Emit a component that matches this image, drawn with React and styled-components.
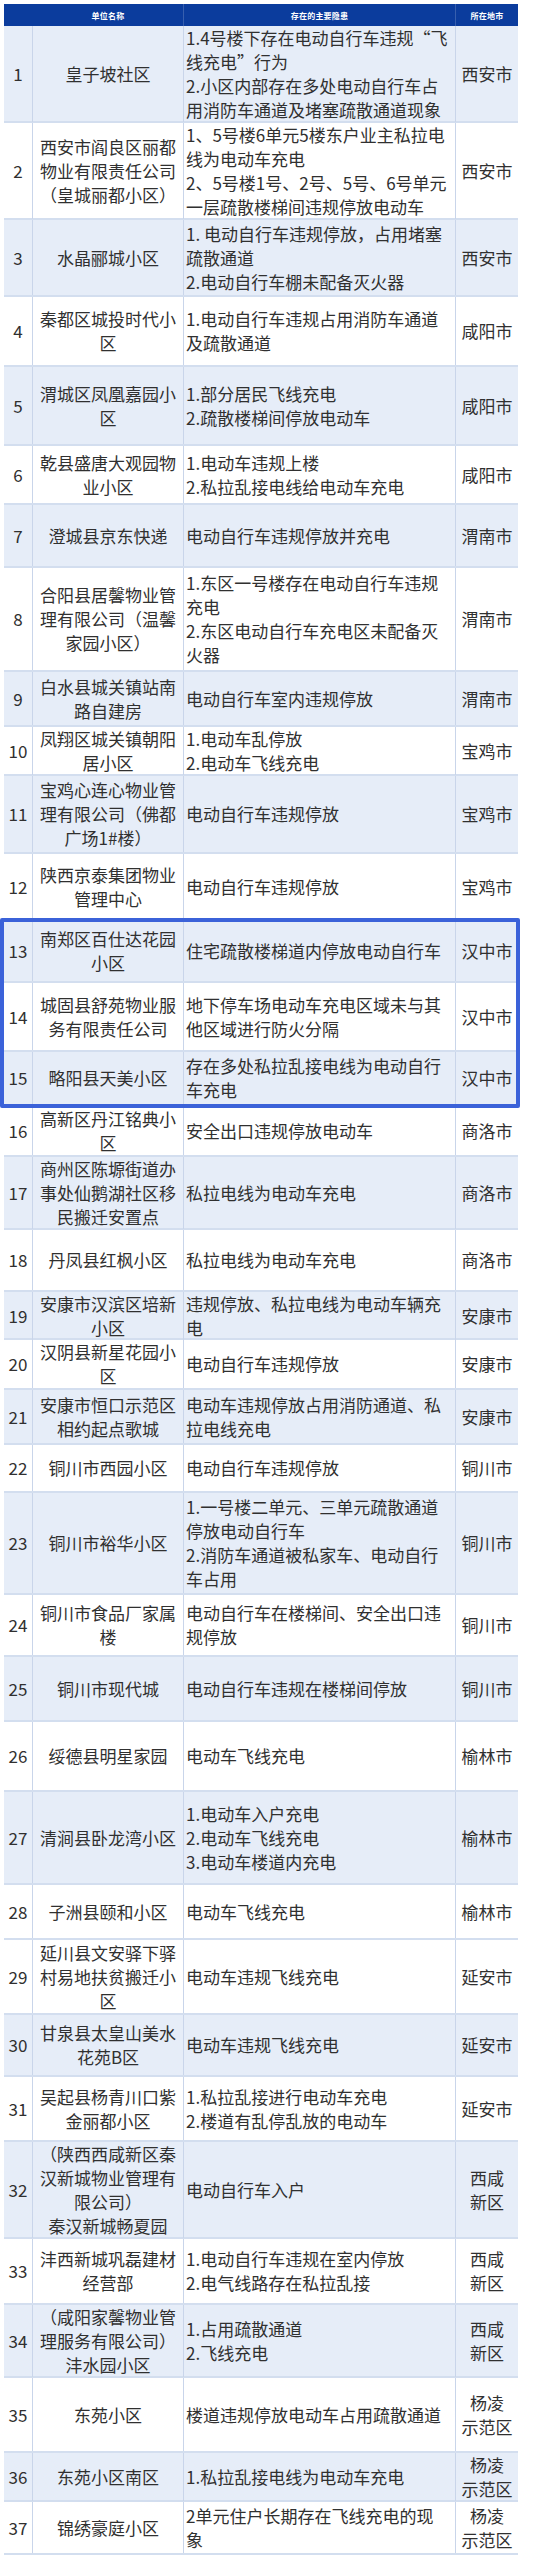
import React from 'react'
import styled, { createGlobalStyle } from 'styled-components'

const Global = createGlobalStyle`
  html, body {
    margin: 0;
    padding: 0;
    background: #ffffff;
  }
  body {
    font-family: "Noto Sans CJK SC", "Noto Sans", sans-serif;
    color: #303030;
  }
`

const COLS = '28px 151px 272px 63px'

const Page = styled.div`
  padding: 4px 21px 5px 4px;
`

const Table = styled.div`
  width: 514px;
  display: flex;
  flex-direction: column;
`

const HeadRow = styled.div`
  display: grid;
  grid-template-columns: ${COLS};
  height: 22px;
  background: #0b3c9d;
  color: #ffffff;
  font-size: 8px;
  font-weight: 700;
`

const HeadCell = styled.div`
  display: flex;
  align-items: center;
  justify-content: center;
  border-left: 1px solid ${p => (p.$first ? 'transparent' : 'rgba(255,255,255,0.18)')};
  letter-spacing: 0.2px;
`

const Row = styled.div`
  box-sizing: border-box;
  display: grid;
  grid-template-columns: ${COLS};
  height: ${p => p.$h}px;
  background: ${p => (p.$stripe ? '#e6edf8' : '#ffffff')};
  border-bottom: 2px solid #d3deef;
  font-size: 17px;
  line-height: 24px;
`

const Cell = styled.div`
  display: flex;
  flex-direction: column;
  justify-content: center;
  border-left: 1px solid #c9d5ea;
  overflow: visible;
  white-space: nowrap;
`

const NumCell = styled(Cell)`
  align-items: center;
  border-left: none;
`

const NameCell = styled(Cell)`
  align-items: center;
  text-align: center;
`

const IssueCell = styled(Cell)`
  align-items: flex-start;
  padding-left: 2px;
`

const CityCell = styled(Cell)`
  align-items: center;
  text-align: center;
`

const Line = styled.span`
  display: block;
`

const Highlight = styled.div`
  position: relative;
  &::after {
    content: '';
    position: absolute;
    top: -3px;
    bottom: -2px;
    left: -4px;
    right: -2px;
    border: 4px solid #3b62d9;
    border-radius: 2px;
    pointer-events: none;
  }
`

const rows = [
  [97, true, ['皇子坡社区'], ['1.4号楼下存在电动自行车违规“飞', '线充电”行为', '2.小区内部存在多处电动自行车占', '用消防车通道及堵塞疏散通道现象'], ['西安市']],
  [97, false, ['西安市阎良区丽都', '物业有限责任公司', '（皇城丽都小区）'], ['1、5号楼6单元5楼东户业主私拉电', '线为电动车充电', '2、5号楼1号、2号、5号、6号单元', '一层疏散楼梯间违规停放电动车'], ['西安市']],
  [77, true, ['水晶郦城小区'], ['1. 电动自行车违规停放，占用堵塞', '疏散通道', '2.电动自行车棚未配备灭火器'], ['西安市']],
  [70, false, ['秦都区城投时代小', '区'], ['1.电动自行车违规占用消防车通道', '及疏散通道'], ['咸阳市']],
  [79, true, ['渭城区凤凰嘉园小', '区'], ['1.部分居民飞线充电', '2.疏散楼梯间停放电动车'], ['咸阳市']],
  [59, false, ['乾县盛唐大观园物', '业小区'], ['1.电动车违规上楼', '2.私拉乱接电线给电动车充电'], ['咸阳市']],
  [63, true, ['澄城县京东快递'], ['电动自行车违规停放并充电'], ['渭南市']],
  [104, false, ['合阳县居馨物业管', '理有限公司（温馨', '家园小区）'], ['1.东区一号楼存在电动自行车违规', '充电', '2.东区电动自行车充电区未配备灭', '火器'], ['渭南市']],
  [55, true, ['白水县城关镇站南', '路自建房'], ['电动自行车室内违规停放'], ['渭南市']],
  [49, false, ['凤翔区城关镇朝阳', '居小区'], ['1.电动车乱停放', '2.电动车飞线充电'], ['宝鸡市']],
  [78, true, ['宝鸡心连心物业管', '理有限公司（佛都', '广场1#楼）'], ['电动自行车违规停放'], ['宝鸡市']],
  [67, false, ['陕西京泰集团物业', '管理中心'], ['电动自行车违规停放'], ['宝鸡市']],
  [62, true, ['南郑区百仕达花园', '小区'], ['住宅疏散楼梯道内停放电动自行车'], ['汉中市']],
  [69, false, ['城固县舒苑物业服', '务有限责任公司'], ['地下停车场电动车充电区域未与其', '他区域进行防火分隔'], ['汉中市']],
  [54, true, ['略阳县天美小区'], ['存在多处私拉乱接电线为电动自行', '车充电'], ['汉中市']],
  [51, false, ['高新区丹江铭典小', '区'], ['安全出口违规停放电动车'], ['商洛市']],
  [73, true, ['商州区陈塬街道办', '事处仙鹅湖社区移', '民搬迁安置点'], ['私拉电线为电动车充电'], ['商洛市']],
  [62, false, ['丹凤县红枫小区'], ['私拉电线为电动车充电'], ['商洛市']],
  [48, true, ['安康市汉滨区培新', '小区'], ['违规停放、私拉电线为电动车辆充', '电'], ['安康市']],
  [50, false, ['汉阴县新星花园小', '区'], ['电动自行车违规停放'], ['安康市']],
  [55, true, ['安康市恒口示范区', '相约起点歌城'], ['电动车违规停放占用消防通道、私', '拉电线充电'], ['安康市']],
  [48, false, ['铜川市西园小区'], ['电动自行车违规停放'], ['铜川市']],
  [102, true, ['铜川市裕华小区'], ['1.一号楼二单元、三单元疏散通道', '停放电动自行车', '2.消防车通道被私家车、电动自行', '车占用'], ['铜川市']],
  [62, false, ['铜川市食品厂家属', '楼'], ['电动自行车在楼梯间、安全出口违', '规停放'], ['铜川市']],
  [65, true, ['铜川市现代城'], ['电动自行车违规在楼梯间停放'], ['铜川市']],
  [70, false, ['绥德县明星家园'], ['电动车飞线充电'], ['榆林市']],
  [93, true, ['清涧县卧龙湾小区'], ['1.电动车入户充电', '2.电动车飞线充电', '3.电动车楼道内充电'], ['榆林市']],
  [55, false, ['子洲县颐和小区'], ['电动车飞线充电'], ['榆林市']],
  [75, false, ['延川县文安驿下驿', '村易地扶贫搬迁小', '区'], ['电动车违规飞线充电'], ['延安市']],
  [62, true, ['甘泉县太皇山美水', '花苑B区'], ['电动车违规飞线充电'], ['延安市']],
  [65, false, ['吴起县杨青川口紫', '金丽都小区'], ['1.私拉乱接进行电动车充电', '2.楼道有乱停乱放的电动车'], ['延安市']],
  [97, true, ['（陕西西咸新区秦', '汉新城物业管理有', '限公司）', '秦汉新城畅夏园'], ['电动自行车入户'], ['西咸', '新区']],
  [66, false, ['沣西新城巩磊建材', '经营部'], ['1.电动自行车违规在室内停放', '2.电气线路存在私拉乱接'], ['西咸', '新区']],
  [73, true, ['（咸阳家馨物业管', '理服务有限公司）', '沣水园小区'], ['1.占用疏散通道', '2.飞线充电'], ['西咸', '新区']],
  [75, false, ['东苑小区'], ['楼道违规停放电动车占用疏散通道'], ['杨凌', '示范区']],
  [49, true, ['东苑小区南区'], ['1.私拉乱接电线为电动车充电'], ['杨凌', '示范区']],
  [53, false, ['锦绣豪庭小区'], ['2单元住户长期存在飞线充电的现', '象'], ['杨凌', '示范区']],
]

const Lines = ({ items }) => items.map((t, i) => <Line key={i}>{t}</Line>)

const TableRow = ({ n, data }) => {
  const [h, stripe, name, issue, city] = data
  return (
    <Row $h={h} $stripe={stripe}>
      <NumCell>{n}</NumCell>
      <NameCell><Lines items={name} /></NameCell>
      <IssueCell><Lines items={issue} /></IssueCell>
      <CityCell><Lines items={city} /></CityCell>
    </Row>
  )
}

const App = () => {
  const before = rows.slice(0, 12)
  const marked = rows.slice(12, 15)
  const after = rows.slice(15)
  return (
    <Page>
      <Global />
      <Table>
        <HeadRow>
          <HeadCell $first />
          <HeadCell $first>单位名称</HeadCell>
          <HeadCell>存在的主要隐患</HeadCell>
          <HeadCell>所在地市</HeadCell>
        </HeadRow>
        {before.map((r, i) => <TableRow key={i} n={i + 1} data={r} />)}
        <Highlight>
          {marked.map((r, i) => <TableRow key={i} n={i + 13} data={r} />)}
        </Highlight>
        {after.map((r, i) => <TableRow key={i} n={i + 16} data={r} />)}
      </Table>
    </Page>
  )
}

export default App
